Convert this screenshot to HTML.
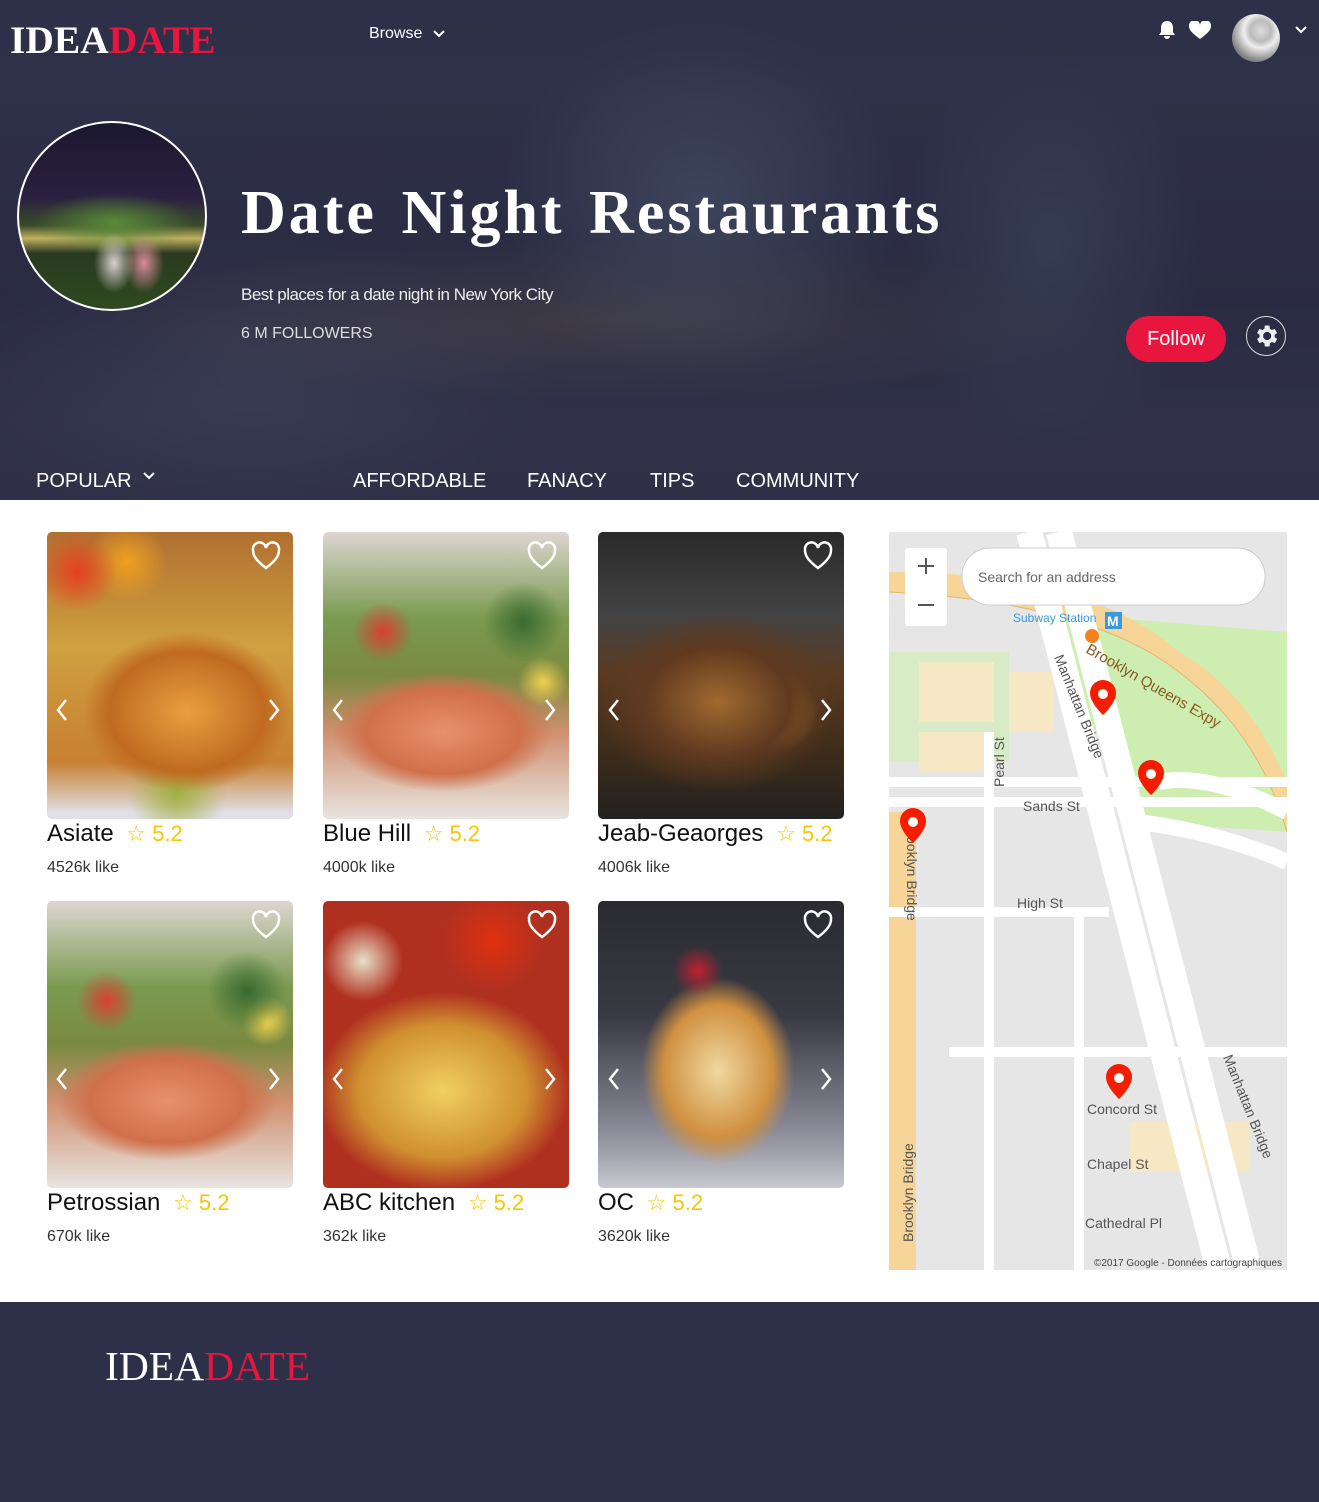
<!DOCTYPE html>
<html><head><meta charset="utf-8"><style>
*{margin:0;padding:0;box-sizing:border-box}
body{width:1319px;height:1502px;background:#fff;font-family:"Liberation Sans",sans-serif;position:relative;overflow:hidden}
.hero{position:absolute;left:0;top:0;width:1319px;height:500px;background:
radial-gradient(ellipse 200px 180px at 700px 200px,rgba(90,110,130,.35),transparent),
radial-gradient(ellipse 150px 200px at 1050px 250px,rgba(70,90,110,.35),transparent),
radial-gradient(ellipse 500px 80px at 600px 320px,rgba(120,100,80,.25),transparent),
radial-gradient(ellipse 300px 150px at 250px 380px,rgba(80,85,110,.3),transparent),
linear-gradient(#2e2f48 0,#2f3049 90px,#2a2b42 300px,#303149 420px,#2f3048 500px)}
.abs{position:absolute}
.logo{font-family:"Liberation Serif",serif;font-weight:bold;color:#fff}
.logo span{color:#e8163f}
.nav{color:#fff;font-size:20px;top:470px}
.card{position:absolute;width:246px;height:287px;border-radius:5px;overflow:hidden}
.t{position:absolute;font-size:24px;color:#111}
.t b{font-weight:normal;color:#f6c600;font-size:22px;margin-left:6px}
.l{position:absolute;font-size:16px;color:#333}
</style></head><body>
<div class="hero"></div>
<div class="abs logo" style="left:10px;top:17px;font-size:39.5px">IDEA<span>DATE</span></div>
<div class="abs" style="left:369px;top:25px;color:#fff;font-size:16px">Browse <svg width="12" height="10" style="margin-left:6px"><path d="M1 3l5 5 5-5" stroke="#fff" stroke-width="2" fill="none"/></svg></div>
<svg class="abs" style="left:1158px;top:20px" width="18" height="20"><path d="M9 1c-4 0-6 3-6 7v4l-2 3h16l-2-3V8c0-4-2-7-6-7z M6 16a3 3 0 0 0 6 0z" fill="#fff"/></svg>
<svg class="abs" style="left:1189px;top:21px" width="22" height="19"><path d="M11 18C3 12 0 9 0 5a5 5 0 0 1 11-1 5 5 0 0 1 11 1c0 4-3 7-11 13z" fill="#fff"/></svg>
<div class="abs" style="left:1232px;top:14px;width:48px;height:48px;border-radius:50%;background:radial-gradient(circle at 60% 35%,#ddd 0,#bbb 25%,#eee 40%,#888 70%,#444 100%)"></div>
<svg class="abs" style="left:1294px;top:25px" width="14" height="10"><path d="M2 2l5 5 5-5" stroke="#fff" stroke-width="2" fill="none"/></svg>
<div class="abs" style="left:17px;top:121px;width:190px;height:190px;border-radius:50%;border:2px solid #fff;background:
radial-gradient(ellipse 20px 30px at 95px 140px,#d8d0d0,transparent),radial-gradient(ellipse 20px 30px at 125px 140px,#d88a9a,transparent),
radial-gradient(ellipse 80px 30px at 95px 100px,#5a8a3a,transparent),
linear-gradient(#1c1830 0,#2a2040 40%,#3a4a2a 55%,#c0b060 62%,#2a3a20 70%,#2f4a1f 100%)"></div>
<div class="abs" style="left:241px;top:178px;font-family:'Liberation Serif',serif;font-weight:bold;color:#fff;font-size:62px;letter-spacing:3px;word-spacing:6px">Date Night Restaurants</div>
<div class="abs" style="left:241px;top:285px;color:#eee;font-size:17px;letter-spacing:-.5px">Best places for a date night in New York City</div>
<div class="abs" style="left:241px;top:325px;color:#ddd;font-size:16px">6 M FOLLOWERS</div>
<div class="abs" style="left:1126px;top:316px;width:100px;height:46px;border-radius:23px;background:#e8163f;color:#fff;font-size:20px;text-align:center;line-height:46px">Follow</div>
<div class="abs" style="left:1246px;top:316px;width:40px;height:40px;border-radius:50%;border:1.5px solid #ddd;"></div>
<svg class="abs" style="left:1252px;top:322px" width="28" height="28" viewBox="0 0 24 24"><path fill="#eee" d="M19.4 13a7.5 7.5 0 0 0 0-2l2.1-1.6-2-3.5-2.5 1a7 7 0 0 0-1.7-1L15 3h-4l-.4 2.9a7 7 0 0 0-1.7 1l-2.5-1-2 3.5L6.5 11a7.5 7.5 0 0 0 0 2l-2.1 1.6 2 3.5 2.5-1a7 7 0 0 0 1.700 1L11 21h4l.4-2.9a7 7 0 0 0 1.7-1l2.5 1 2-3.5zM13 15.5a3.5 3.5 0 1 1 0-7 3.5 3.5 0 0 1 0 7z"/></svg>
<div class="abs nav" style="left:36px">POPULAR <svg width="12" height="10" style="margin-left:6px;vertical-align:6px"><path d="M1 2l5 5 5-5" stroke="#fff" stroke-width="2" fill="none"/></svg></div>
<div class="abs nav" style="left:353px">AFFORDABLE</div>
<div class="abs nav" style="left:527px">FANACY</div>
<div class="abs nav" style="left:650px">TIPS</div>
<div class="abs nav" style="left:736px">COMMUNITY</div>

<div class="card" style="left:47px;top:532px;background:radial-gradient(circle at 30px 40px,#e84020 0,transparent 40px),radial-gradient(circle at 80px 30px,#f0a020 0,transparent 40px),radial-gradient(ellipse 130px 100px at 140px 180px,#e8a040,#c06a20 60%,transparent 80%),radial-gradient(circle at 130px 260px,#a0b040,transparent 50px),linear-gradient(#b07030,#d0a040 40%,#c88030 80%,#e0e0e8 98%)"></div>
<div class="card" style="left:323px;top:532px;background:radial-gradient(ellipse 110px 60px at 120px 200px,#e8906a,#d0704a 70%,transparent),radial-gradient(circle at 60px 100px,#d84030,transparent 30px),radial-gradient(circle at 200px 90px,#3a6a30,transparent 40px),radial-gradient(circle at 220px 150px,#f0d050,transparent 25px),linear-gradient(#ddd6d0,#7a9a50 30%,#7a8a40 50%,#d09070 70%,#e8e4e0 100%)"></div>
<div class="card" style="left:598px;top:532px;background:radial-gradient(ellipse 120px 90px at 120px 170px,#a06a30,#603a20 60%,transparent),radial-gradient(circle at 180px 180px,#e0a030,transparent 40px),linear-gradient(#2a2a2a,#444 30%,#5a3a20 50%,#3a2a1a 80%,#222 100%)"></div>
<div class="card" style="left:47px;top:901px;background:radial-gradient(ellipse 110px 60px at 120px 200px,#e8906a,#d0704a 70%,transparent),radial-gradient(circle at 60px 100px,#d84030,transparent 30px),radial-gradient(circle at 200px 90px,#3a6a30,transparent 40px),radial-gradient(circle at 220px 120px,#f0d050,transparent 25px),linear-gradient(#ddd6d0,#7a9a50 30%,#7a8a40 50%,#d09070 70%,#e8e4e0 100%)"></div>
<div class="card" style="left:323px;top:901px;background:radial-gradient(circle at 170px 40px,#e03010,transparent 50px),radial-gradient(circle at 40px 60px,#e8e0c8,transparent 40px),radial-gradient(ellipse 140px 110px at 120px 190px,#f0d060,#d09030 60%,#b03020 90%),linear-gradient(#3a2010,#c07030)"></div>
<div class="card" style="left:598px;top:901px;background:radial-gradient(circle at 100px 70px,#c02030,transparent 25px),radial-gradient(ellipse 90px 110px at 120px 170px,#f0d8a0,#d09040 60%,transparent 85%),linear-gradient(#2a2a30,#3a3a44 40%,#8a8a98 80%,#c8c8d0 100%)"></div>
<svg class="abs" style="left:0;top:0" width="860" height="1200">
<g fill="none" stroke="#fff" stroke-width="2.5">
<path d="M266 568c-12-9-13-14-13-18a6.5 6.5 0 0 1 13-2 6.5 6.5 0 0 1 13 2c0 4-1 9-13 18z"/>
<path d="M542 568c-12-9-13-14-13-18a6.5 6.5 0 0 1 13-2 6.5 6.5 0 0 1 13 2c0 4-1 9-13 18z"/>
<path d="M818 568c-12-9-13-14-13-18a6.5 6.5 0 0 1 13-2 6.5 6.5 0 0 1 13 2c0 4-1 9-13 18z"/>
<path d="M266 937c-12-9-13-14-13-18a6.5 6.5 0 0 1 13-2 6.5 6.5 0 0 1 13 2c0 4-1 9-13 18z"/>
<path d="M542 937c-12-9-13-14-13-18a6.5 6.5 0 0 1 13-2 6.5 6.5 0 0 1 13 2c0 4-1 9-13 18z"/>
<path d="M818 937c-12-9-13-14-13-18a6.5 6.5 0 0 1 13-2 6.5 6.5 0 0 1 13 2c0 4-1 9-13 18z"/>
<path d="M66 700l-8 10 8 10M270 700l8 10-8 10M342 700l-8 10 8 10M546 700l8 10-8 10M618 700l-8 10 8 10M822 700l8 10-8 10"/>
<path d="M66 1069l-8 10 8 10M270 1069l8 10-8 10M342 1069l-8 10 8 10M546 1069l8 10-8 10M618 1069l-8 10 8 10M822 1069l8 10-8 10"/>
</g></svg>
<div class="t" style="left:47px;top:820px">Asiate <b>☆ 5.2</b></div><div class="l" style="left:47px;top:859px">4526k like</div>
<div class="t" style="left:323px;top:820px">Blue Hill <b>☆ 5.2</b></div><div class="l" style="left:323px;top:859px">4000k like</div>
<div class="t" style="left:598px;top:820px">Jeab-Geaorges <b>☆ 5.2</b></div><div class="l" style="left:598px;top:859px">4006k like</div>
<div class="t" style="left:47px;top:1189px">Petrossian <b>☆ 5.2</b></div><div class="l" style="left:47px;top:1228px">670k like</div>
<div class="t" style="left:323px;top:1189px">ABC kitchen <b>☆ 5.2</b></div><div class="l" style="left:323px;top:1228px">362k like</div>
<div class="t" style="left:598px;top:1189px">OC <b>☆ 5.2</b></div><div class="l" style="left:598px;top:1228px">3620k like</div>

<svg class="abs" style="left:889px;top:532px;font-family:'Liberation Sans',sans-serif" width="398" height="738">
<rect width="398" height="738" fill="#e6e6e6"/>
<path d="M150 80L398 100V300L250 290Z" fill="#cdeeb0"/>
<path d="M0 120H120V230H0Z" fill="#cdeeb0" opacity=".6"/>
<rect x="30" y="130" width="75" height="60" fill="#f6e8c4"/><rect x="30" y="200" width="75" height="40" fill="#f6e8c4"/>
<rect x="120" y="140" width="45" height="60" fill="#f6e8c4"/><rect x="240" y="590" width="120" height="50" fill="#f6e8c4"/>
<path d="M0 60Q200 70 290 140Q370 200 398 300V250Q360 160 290 120Q200 40 0 40Z" fill="#f7d598"/>
<path d="M0 60Q200 70 290 140Q370 200 398 300" stroke="#e0b870" fill="none"/>
<path d="M20 280V738M6 280V738" stroke="#f7d598" stroke-width="14"/>
<path d="M140 0L330 738M170 0L360 738" stroke="#fff" stroke-width="26"/>
<path d="M0 250H398M0 270H398M100 200V738M190 380V738M0 380H220M60 520H398" stroke="#fff" stroke-width="10"/>
<path d="M270 250Q320 240 398 280" stroke="#fff" stroke-width="16" fill="none"/>
<path d="M250 290Q330 300 398 330" stroke="#fff" stroke-width="16" fill="none"/>
<text x="196" y="120" font-size="15" fill="#8a5a20" transform="rotate(30 196 120)">Brooklyn Queens Expy</text>
<text x="165" y="125" font-size="14" fill="#555" transform="rotate(68 165 125)">Manhattan Bridge</text>
<text x="115" y="255" font-size="14" fill="#555" transform="rotate(-90 115 255)">Pearl St</text>
<text x="134" y="279" font-size="14" fill="#555">Sands St</text>
<text x="128" y="376" font-size="14" fill="#555">High St</text>
<text x="18" y="290" font-size="14" fill="#555" transform="rotate(90 18 290)">Brooklyn Bridge</text>
<text x="24" y="710" font-size="14" fill="#555" transform="rotate(-90 24 710)">Brooklyn Bridge</text>
<text x="198" y="582" font-size="14" fill="#555">Concord St</text>
<text x="198" y="637" font-size="14" fill="#555">Chapel St</text>
<text x="196" y="696" font-size="14" fill="#555">Cathedral Pl</text>
<text x="334" y="525" font-size="14" fill="#555" transform="rotate(68 334 525)">Manhattan Bridge</text>
<text x="124" y="90" font-size="12" fill="#3a9ae0">Subway Station</text>
<rect x="216" y="80" width="17" height="17" fill="#3a9ae0"/><text x="218" y="94" font-size="14" fill="#fff" font-weight="bold">M</text>
<circle cx="203" cy="104" r="7" fill="#f5821f"/>
<text x="205" y="734" font-size="10" fill="#444">©2017 Google - Données cartographiques</text>
<g fill="#f51d00">
<path d="M214 148a13 13 0 0 1 13 13c0 10-13 22-13 22s-13-12-13-22a13 13 0 0 1 13-13z"/>
<path d="M262 228a13 13 0 0 1 13 13c0 10-13 22-13 22s-13-12-13-22a13 13 0 0 1 13-13z"/>
<path d="M24 276a13 13 0 0 1 13 13c0 10-13 22-13 22s-13-12-13-22a13 13 0 0 1 13-13z"/>
<path d="M230 532a13 13 0 0 1 13 13c0 10-13 22-13 22s-13-12-13-22a13 13 0 0 1 13-13z"/>
</g>
<g fill="#fff"><circle cx="214" cy="162" r="5"/><circle cx="262" cy="242" r="5"/><circle cx="24" cy="290" r="5"/><circle cx="230" cy="546" r="5"/></g>
<rect x="16" y="16" width="42" height="78" rx="3" fill="#fff"/>
<path d="M37 26v16M29 34h16M29 73h16" stroke="#555" stroke-width="2"/>
<rect x="73" y="16" width="303" height="57" rx="28" fill="#fff" stroke="#ccc"/>
<text x="89" y="50" font-size="14" fill="#666">Search for an address</text>
</svg>

<div class="abs" style="left:0;top:1302px;width:1319px;height:200px;background:#2e2f48"></div>
<div class="abs logo" style="left:105px;top:1342px;font-size:41.5px;font-weight:normal">IDEA<span>DATE</span></div>
</body></html>
